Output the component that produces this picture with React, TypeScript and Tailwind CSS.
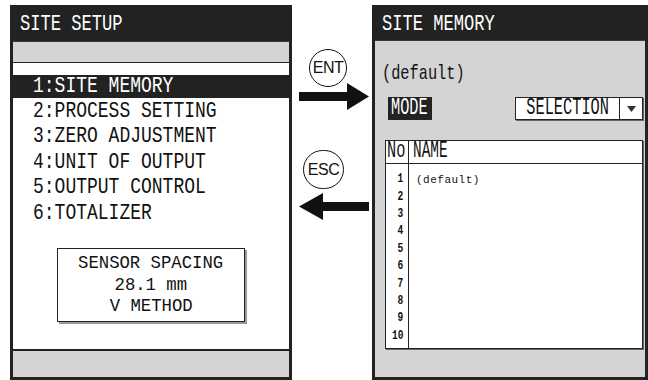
import React from "react";

const mono = "font-['Liberation_Mono',monospace] whitespace-pre leading-[0.75] inline-block";

const menu = [
  "2:PROCESS SETTING",
  "3:ZERO ADJUSTMENT",
  "4:UNIT OF OUTPUT",
  "5:OUTPUT CONTROL",
  "6:TOTALIZER",
];

function RightArrow() {
  return (
    <svg width="70" height="27" viewBox="0 0 70 27">
      <polygon points="0,9 48,9 48,0 70,13.5 48,27 48,18 0,18" fill="#111" />
    </svg>
  );
}

function LeftArrow() {
  return (
    <svg width="70" height="27" viewBox="0 0 70 27">
      <polygon points="70,9 24,9 24,0 0,13.5 24,27 24,18 70,18" fill="#111" />
    </svg>
  );
}

export default function App() {
  return (
    <div className="w-[648px] h-[380px] bg-white flex pl-[10px] pt-[5px] overflow-hidden">
      {/* left screen */}
      <div className="w-[282px] h-[375px] border-[3px] border-[#222] flex flex-col bg-white">
        <div className="h-[34px] bg-[#222] text-white flex items-center pl-[7px] border-b border-[#3a3a3a]">
          <span className={`${mono} origin-left scale-x-[0.9] scale-y-[1.2] text-[19px]`}>SITE SETUP</span>
        </div>
        <div className="h-[21px] bg-[#d4d4d4] border-b border-[#222]" />
        <div className="flex-1 flex flex-col pt-[12px]">
          <div className="h-[23px] bg-[#222] text-white flex items-center pl-[20px]">
            <span className={`${mono} origin-left scale-x-[0.9] scale-y-[1.08] text-[20px]`}>1:SITE MEMORY</span>
          </div>
          <div className="h-[26px] flex items-center pl-[20px] text-[#111]">
            <span className={`${mono} origin-left scale-x-[0.9] scale-y-[1.08] text-[20px]`}>{menu[0]}</span>
          </div>
          {menu.slice(1).map((m) => (
            <div key={m} className="h-[25.5px] flex items-center pl-[20px] text-[#111]">
              <span className={`${mono} origin-left scale-x-[0.9] scale-y-[1.08] text-[20px]`}>{m}</span>
            </div>
          ))}
          <div className="mx-auto mt-[22px] w-[188px] h-[74px] border border-[#222] shadow-[2px_2px_0_#999] flex flex-col items-center pt-[4px] text-[#111]">
            <div className="h-[21.5px] flex items-center">
              <span className={`${mono} origin-center scale-x-[0.96] scale-y-[1.05] text-[18px]`}>SENSOR SPACING</span>
            </div>
            <div className="h-[21.5px] flex items-center">
              <span className={`${mono} origin-center scale-x-[0.96] scale-y-[1.05] text-[18px]`}>28.1 mm</span>
            </div>
            <div className="h-[21.5px] flex items-center">
              <span className={`${mono} origin-center scale-x-[0.96] scale-y-[1.05] text-[18px]`}>V METHOD</span>
            </div>
          </div>
        </div>
        <div className="h-[28px] bg-[#d4d4d4] border-t-2 border-[#222]" />
      </div>

      {/* keys and arrows */}
      <div className="w-[80px] flex flex-col font-['Liberation_Sans',sans-serif] text-[#111]">
        <div className="ml-[17px] mt-[44px] w-[38px] h-[38px] rounded-full border border-[#111] flex items-center justify-center text-[16px] font-medium tracking-[-0.5px] bg-white">
          ENT
        </div>
        <div className="ml-[7px] -mt-[4px]">
          <RightArrow />
        </div>
        <div className="ml-[11px] mt-[40px] w-[41px] h-[39px] rounded-full border border-[#111] flex items-center justify-center text-[16px] font-medium tracking-[-0.5px] bg-white">
          ESC
        </div>
        <div className="ml-[7px] mt-[4px]">
          <LeftArrow />
        </div>
      </div>

      {/* right screen */}
      <div className="w-[276px] h-[375px] border-[3px] border-[#222] flex flex-col bg-[#d4d4d4] text-[#111]">
        <div className="h-[33px] bg-[#222] text-white flex items-center pl-[7px] border-b border-[#3a3a3a]">
          <span className={`${mono} origin-left scale-x-[0.9] scale-y-[1.2] text-[19px]`}>SITE MEMORY</span>
        </div>
        <div className="mt-[22px] h-[24px] flex items-center pl-[7px]">
          <span className={`${mono} origin-left scale-x-[0.85] scale-y-[1.1] text-[18px]`}>(default)</span>
        </div>
        <div className="mt-[10px] h-[23px] flex items-center justify-between pl-[13px] pr-[2px]">
          <div className="w-[44px] h-[23px] bg-[#222] text-white flex items-center pl-[3px]">
            <span className={`${mono} origin-left scale-x-[0.85] scale-y-[1.35] text-[18px]`}>MODE</span>
          </div>
          <div className="w-[128px] h-[23px] border border-[#222] shadow-[1px_1px_0_#666] bg-white flex">
            <div className="w-[104px] flex items-center justify-center border-r border-[#222]">
              <span className={`${mono} origin-center scale-x-[0.85] scale-y-[1.35] text-[18px]`}>SELECTION</span>
            </div>
            <div className="flex-1 flex items-center justify-center">
              <svg width="9" height="6" viewBox="0 0 9 6">
                <polygon points="0,0 9,0 4.5,6" fill="#333" />
              </svg>
            </div>
          </div>
        </div>
        <div className="mt-[20px] ml-[10px] w-[258px] h-[209px] border border-[#222] shadow-[1px_1px_0_#666] bg-white flex flex-col">
          <div className="h-[23px] flex border-b border-[#222]">
            <div className="w-[23px] border-r border-[#222] flex items-center pl-[1px]">
              <span className={`${mono} origin-left scale-x-[0.85] scale-y-[1.35] text-[18px]`}>No</span>
            </div>
            <div className="flex-1 flex items-center pl-[4px]">
              <span className={`${mono} origin-left scale-x-[0.8] scale-y-[1.35] text-[18px]`}>NAME</span>
            </div>
          </div>
          <div className="flex-1 flex">
            <div className="w-[23px] border-r border-[#222] flex flex-col items-end pr-[5px] pt-[7px]">
              {[1, 2, 3, 4, 5, 6, 7, 8, 9, 10].map((n) => (
                <div key={n} className="h-[17.4px] flex items-center">
                  <span className={`${mono} origin-right scale-x-[0.8] scale-y-[1.1] text-[12px] font-bold`}>{n}</span>
                </div>
              ))}
            </div>
            <div className="flex-1 pl-[7px] pt-[7px]">
              <div className="h-[17.4px] flex items-center">
                <span className={`${mono} text-[11px] tracking-[0.5px]`}>(default)</span>
              </div>
            </div>
          </div>
        </div>
      </div>
    </div>
  );
}
